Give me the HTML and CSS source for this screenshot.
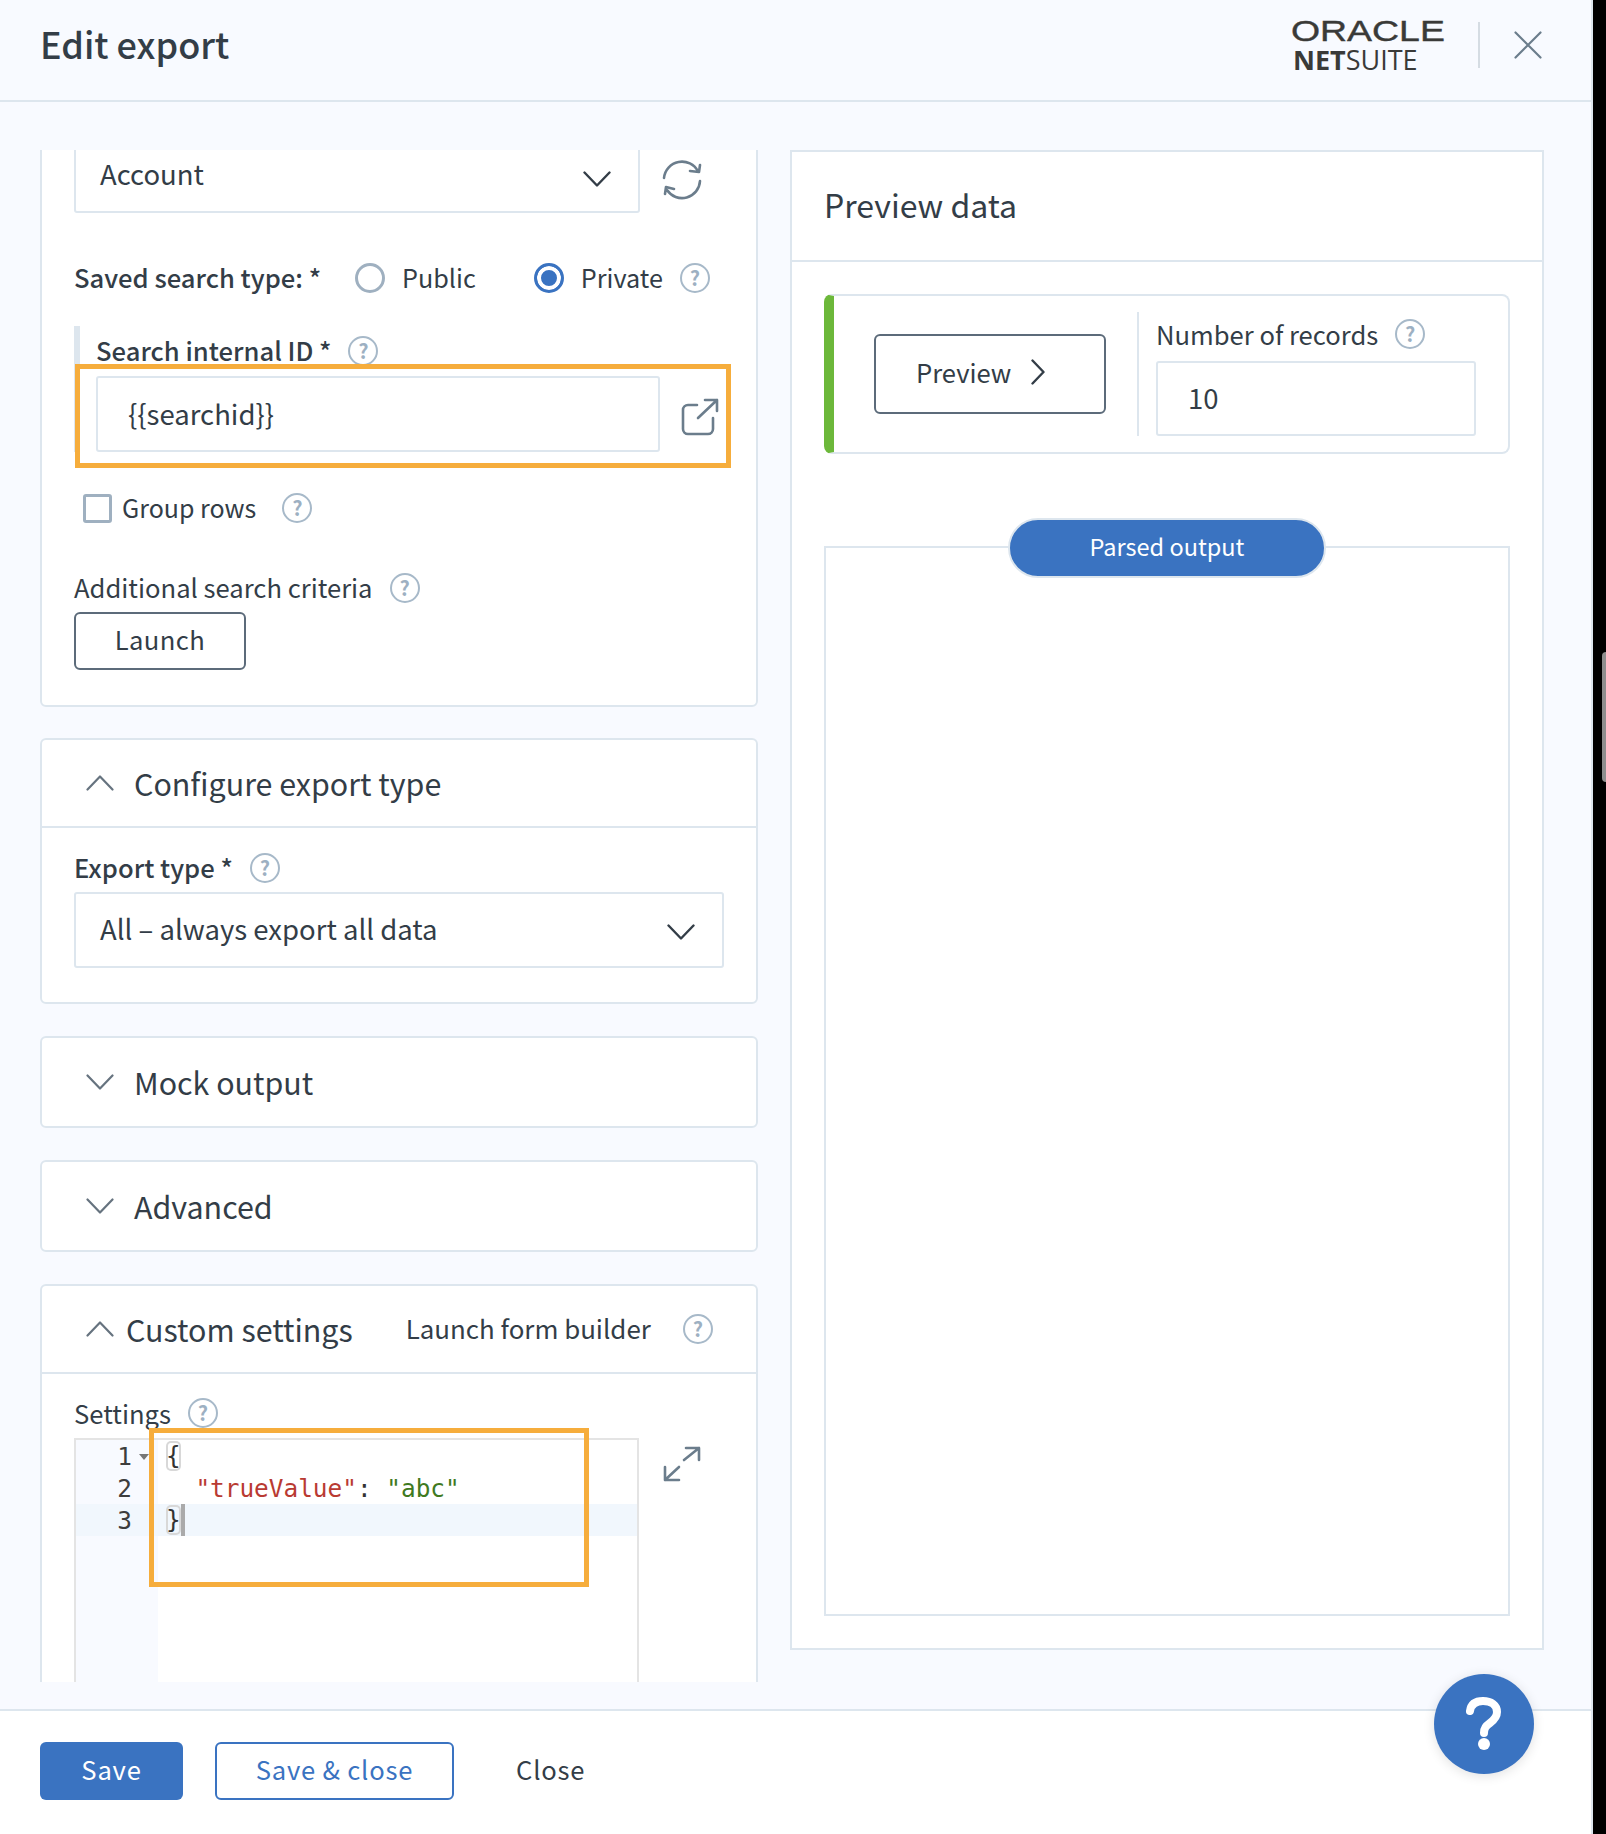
FILE: index.html
```html
<!DOCTYPE html>
<html lang="en">
<head>
<meta charset="utf-8">
<title>Edit export</title>
<link rel="stylesheet" href="styles.css">
</head>
<body>
<svg class="sprite" aria-hidden="true">
  <symbol id="chev-down" viewBox="0 0 28 16"><path d="M1.500 1.500 14 14.500 26.500 1.500"/></symbol>
  <symbol id="chev-up" viewBox="0 0 28 16"><path d="M1.500 14.500 14 1.500 26.500 14.500"/></symbol>
  <symbol id="refresh" viewBox="0 0 40 40"><path d="M2 18A18 18 0 0 1 36 11.500M28 11l9 1 1-7M38 21A18 18 0 0 1 5 30M3 34l1-7 8 2"/></symbol>
  <symbol id="external" viewBox="0 0 40 40"><path d="M17 8H8a5 5 0 0 0-5 5v19a5 5 0 0 0 5 5h20a5 5 0 0 0 5-5V21M18 21 37 3M25 3h12v11"/></symbol>
  <symbol id="expand" viewBox="0 0 40 40"><path d="M22 15 37 3M24 3h13v12M17 22 3 35M3 22v13h14"/></symbol>
</svg>
<div class="window">
  <div class="drawer">
    <header class="topbar">
      <h1 class="topbar-title">Edit export</h1>
      <div class="brand">
        <div class="logo">
          <span class="logo-oracle">ORACLE</span>
          <span class="logo-netsuite"><b>NET</b>SUITE</span>
        </div>
        <span class="brand-sep"></span>
        <svg class="close-icon" viewBox="0 0 28 28"><path d="M1.500 1.500 26.500 26.500M26.500 1.500 1.500 26.500"/></svg>
      </div>
    </header>

    <main class="content">
      <div class="col-left">
        <section class="card card-scrolled">
          <div class="row-with-icon">
            <div class="select select-account"><span>Account</span><svg class="chev"><use href="#chev-down"/></svg></div>
            <svg class="tool-icon"><use href="#refresh"/></svg>
          </div>
          <div class="radio-row">
            <span class="label-strong">Saved search type: *</span>
            <span class="radio radio-public"></span><span class="radio-text">Public</span>
            <span class="radio radio-private"></span><span class="radio-text">Private</span>
            <span class="help">?</span>
          </div>
          <div class="search-block">
            <div class="search-label"><span class="label-strong">Search internal ID *</span><span class="help">?</span></div>
            <div class="row-with-icon">
              <div class="input input-search">{{searchid}}</div>
              <svg class="tool-icon tool-external"><use href="#external"/></svg>
            </div>
          </div>
          <div class="check-row">
            <span class="checkbox"></span><span class="check-text">Group rows</span><span class="help help-wide">?</span>
          </div>
          <div class="criteria-label"><span class="label-text">Additional search criteria</span><span class="help">?</span></div>
          <button class="btn btn-launch">Launch</button>
        </section>

        <section class="card card-export">
          <div class="card-head card-head-open">
            <svg class="chev chev-head"><use href="#chev-up"/></svg>
            <h2 class="card-title">Configure export type</h2>
          </div>
          <div class="card-body">
            <div class="field-label"><span class="label-strong">Export type *</span><span class="help">?</span></div>
            <div class="select select-full"><span>All – always export all data</span><svg class="chev"><use href="#chev-down"/></svg></div>
          </div>
        </section>

        <section class="card card-closed">
          <div class="card-head">
            <svg class="chev chev-head"><use href="#chev-down"/></svg>
            <h2 class="card-title">Mock output</h2>
          </div>
        </section>

        <section class="card card-closed">
          <div class="card-head">
            <svg class="chev chev-head"><use href="#chev-down"/></svg>
            <h2 class="card-title">Advanced</h2>
          </div>
        </section>

        <section class="card">
          <div class="card-head card-head-open">
            <svg class="chev chev-head chev-custom"><use href="#chev-up"/></svg>
            <h2 class="card-title">Custom settings</h2>
            <span class="head-link">Launch form builder</span>
            <span class="help help-end">?</span>
          </div>
          <div class="card-body card-body-settings">
            <div class="settings-label"><span>Settings</span><span class="help">?</span></div>
            <div class="row-with-icon row-editor">
              <div class="editor">
                <div class="editor-gutter">
                  <div class="gutter-line">1<i class="fold"></i></div>
                  <div class="gutter-line">2</div>
                  <div class="gutter-line gutter-active">3</div>
                </div>
                <div class="editor-code">
                  <div class="code-line"><span class="bracket">{</span></div>
                  <div class="code-line">  <span class="tok-key">"trueValue"</span>: <span class="tok-str">"abc"</span></div>
                  <div class="code-line code-active"><span class="bracket">}</span><i class="cursor"></i></div>
                </div>
              </div>
              <svg class="tool-icon tool-expand"><use href="#expand"/></svg>
            </div>
          </div>
        </section>
      </div>

      <section class="card preview-card">
        <h2 class="preview-title">Preview data</h2>
        <div class="preview-body">
          <div class="preview-bar">
            <button class="btn btn-preview">Preview<svg class="chev-right" viewBox="0 0 14 26"><path d="M1.500 1.500 12.500 13 1.500 24.500"/></svg></button>
            <span class="bar-sep"></span>
            <div class="records">
              <div class="records-label"><span>Number of records</span><span class="help">?</span></div>
              <div class="input input-records">10</div>
            </div>
          </div>
          <div class="output-panel">
            <span class="pill">Parsed output</span>
          </div>
        </div>
      </section>
    </main>

    <footer class="footer">
      <button class="btn btn-primary">Save</button>
      <button class="btn btn-outline">Save &amp; close</button>
      <button class="btn btn-text">Close</button>
    </footer>

    <div class="note note-search"></div>
    <div class="note note-settings"></div>
    <div class="help-bubble"><svg viewBox="0 0 36 54"><path class="q" d="M4 14C5 7 10 4 17 4c8 0 14 4 14 11 0 5-3 8-7 11-4 3-6 5-6 10"/><circle class="q-dot" cx="18" cy="47" r="6"/></svg></div>
  </div>
  <div class="page-scroll"><span class="page-thumb"></span></div>
</div>
</body>
</html>
```

FILE: styles.css
```css
* { box-sizing: border-box; }
html, body { margin: 0; padding: 0; }
body {
  width: 1606px;
  height: 1834px;
  overflow: hidden;
  background: #000;
  color: #333d47;
  font-family: "Noto Sans CJK SC", "Noto Sans", sans-serif;
  font-size: 25.6px;
  line-height: 36px;
}
.sprite { width: 0; height: 0; position: absolute; }
.window { display: flex; height: 1834px; }
.drawer {
  position: relative;
  width: 1593px;
  height: 1834px;
  display: flex;
  flex-direction: column;
  background: #f8faff;
  border-right: 2px solid #dde6ee;
}
.page-scroll { flex: 1; padding: 652px 0 0 9px; }
.page-thumb { display: block; width: 4px; height: 130px; background: #8e8e8e; border-radius: 4px 0 0 4px; }

/* top bar */
.topbar {
  flex: none;
  height: 102px;
  padding: 0 49px 0 40px;
  display: flex;
  align-items: center;
  justify-content: space-between;
  border-bottom: 2px solid #dde6ee;
}
.topbar-title { margin: -14px 0 0; font-size: 36px; line-height: 44px; font-weight: 500; }
.brand { display: flex; align-items: center; margin-top: -10px; }
.logo { width: 152px; display: flex; flex-direction: column; color: #3a3a38; }
.logo-oracle {
  font-family: "Liberation Sans", sans-serif;
  font-size: 29px;
  line-height: 28px;
  display: block;
  transform: scaleX(1.29);
  transform-origin: left center;
  height: 28px;
  -webkit-text-stroke: 0.4px #3a3a38;
}
.logo-netsuite {
  font-family: "Open Sans", sans-serif;
  font-size: 27px;
  line-height: 28px;
  margin: 1px 0 0 2px;
  white-space: nowrap;
}
.logo-netsuite b { font-weight: 700; }
.brand-sep { width: 2px; height: 46px; background: #d5dce3; margin: 0 34px 0 35px; }
.close-icon { width: 28px; height: 28px; fill: none; stroke: #6b7d8c; stroke-width: 2.2; stroke-linecap: round; }

/* layout */
.content {
  flex: 1;
  min-height: 0;
  display: flex;
  gap: 32px;
  align-items: flex-start;
  padding: 48px 47px 27px 40px;
}
.col-left { width: 718px; height: 100%; overflow: hidden; flex: none; }
.card { background: #fff; border: 2px solid #dde6ee; border-radius: 6px; margin-bottom: 31px; }
.card-export { margin-bottom: 32px; }
.card-closed { margin-bottom: 32px; }
.card-scrolled { margin-top: -50px; padding: 36px 32px 35px; }

.row-with-icon { display: flex; align-items: flex-start; }
.tool-icon { width: 40px; height: 40px; fill: none; stroke: #6b7d8c; stroke-width: 2.6; stroke-linecap: round; stroke-linejoin: round; margin-left: 22px; flex: none; margin-top: 22px; }
.tool-external { margin-left: 20px; margin-top: 21px; }

.select, .input {
  border: 2px solid #dde6ee;
  border-radius: 3px;
  background: #fff;
  display: flex;
  align-items: center;
  font-size: 27.5px;
  padding-bottom: 4px;
}
.select { justify-content: space-between; padding-left: 24px; padding-right: 27px; height: 76px; }
.select-account { width: 566px; height: 75px; padding-bottom: 6px; }
.select-full { width: 650px; }
.chev { width: 28px; height: 16px; fill: none; stroke: #333d47; stroke-width: 2.4; stroke-linecap: round; stroke-linejoin: round; flex: none; }
.select .chev { margin-top: 8px; }
.select-account .chev { margin-top: 12px; }

.label-strong { font-weight: 500; white-space: nowrap; margin-bottom: 2px; }
.label-text { margin-bottom: 2px; }
.radio-row { display: flex; align-items: center; height: 40px; margin-top: 45px; white-space: nowrap; }
.radio { width: 30px; height: 30px; border-radius: 50%; border: 3px solid #9fb0c0; background: #fff; flex: none; }
.radio-public { margin-left: 34px; }
.radio-private { margin-left: 58px; border-color: #3a73c1; box-shadow: inset 0 0 0 4px #fff; background: #3a73c1; }
.radio-text { margin: 0 0 2px 17px; font-size: 25.2px; }

.help {
  display: inline-flex;
  align-items: center;
  justify-content: center;
  width: 30px;
  height: 30px;
  border-radius: 50%;
  border: 2px solid #a7b9c9;
  color: #9db0c2;
  font-size: 20px;
  line-height: 1;
  font-weight: 700;
  background: #fff;
  margin-left: 17px;
  flex: none;
}

.search-block { margin-top: 28px; border-left: 6px solid #dde6ee; padding-left: 16px; }
.search-label { height: 50px; display: flex; align-items: center; }
.input-search { width: 564px; height: 76px; padding-left: 30px; padding-bottom: 2px; }

.check-row { display: flex; align-items: center; height: 40px; margin-top: 36px; padding-left: 9px; }
.checkbox { width: 29px; height: 29px; border: 3px solid #9fb0c0; border-radius: 3px; margin-right: 10px; flex: none; }
.check-text { font-size: 25px; margin-bottom: 2px; }
.help-wide { margin-left: 26px; }

.criteria-label { display: flex; align-items: center; height: 49px; margin-top: 35px; }

.btn { font: inherit; color: inherit; background: #fff; cursor: pointer; padding: 0 0 4px; margin: 0; border-radius: 6px; }
.btn-launch { display: block; width: 172px; height: 58px; border: 2px solid #5c6b7a; letter-spacing: 0.4px; }

.card-head { display: flex; align-items: center; height: 88px; padding-left: 44px; white-space: nowrap; }
.card-head-open { border-bottom: 2px solid #dde6ee; }
.chev-head { stroke: #66737f; stroke-width: 2.2; margin-right: 20px; }
.chev-custom { margin-right: 12px; }
.card-title { margin: 0; font-size: 30.4px; line-height: 40px; font-weight: 400; }
.head-link { margin-left: 53px; margin-bottom: 2px; font-size: 25.9px; }
.help-end { margin-left: 32px; margin-bottom: 1px; }
.card-body { padding: 18px 32px 34px; }
.field-label { display: flex; align-items: center; height: 46px; padding-bottom: 3px; }

.card-body-settings { padding: 18px 32px 0; }
.settings-label { display: flex; align-items: center; height: 45px; margin-top: -2px; margin-bottom: 3px; }
.row-editor { height: 420px; }
.tool-expand { margin-top: 7px; margin-left: 23px; }
.editor {
  width: 565px;
  height: 420px;
  border: 2px solid #e4e4e4;
  border-bottom: 0;
  display: flex;
  font-family: "DejaVu Sans Mono", monospace;
  font-size: 24.4px;
  line-height: 32px;
  flex: none;
}
.editor-gutter { width: 82px; background: #f8faff; flex: none; color: #3d3d3d; }
.gutter-line { height: 32px; padding: 1px 26px 0 0; text-align: right; position: relative; }
.gutter-active { background: #f1f7fd; }
.fold { position: absolute; right: 9px; top: 14px; border: 5px solid transparent; border-top: 6px solid #777; border-bottom: 0; }
.editor-code { flex: 1; }
.code-line { height: 32px; padding: 1px 0 0 8px; color: #333; white-space: pre; }
.code-active { background: #f1f7fd; }
.tok-key { color: #b93a32; }
.tok-str { color: #3f7a1f; }
.bracket { box-shadow: inset 0 0 0 2px #d8d8d8; border-radius: 5px; display: inline-block; height: 30px; vertical-align: top; line-height: 30px; }
.cursor { display: inline-block; width: 4px; height: 32px; margin-top: -1px; background: #aaa; vertical-align: top; }

/* right */
.preview-card { width: 754px; border-radius: 0; margin: 0; flex: none; }
.preview-title { margin: 0; height: 110px; border-bottom: 2px solid #dde6ee; padding: 0 0 4px 32px; display: flex; align-items: center; font-size: 32px; line-height: 40px; font-weight: 400; }
.preview-body { padding: 32px; }
.preview-bar {
  height: 160px;
  border: 2px solid #dde6ee;
  border-left: 10px solid #6cb83a;
  border-radius: 8px;
  display: flex;
  align-items: center;
  padding-left: 40px;
}
.btn-preview { width: 232px; height: 80px; border: 2px solid #5c6b7a; display: flex; align-items: center; padding-left: 40px; }
.chev-right { width: 14px; height: 26px; margin-left: 20px; fill: none; stroke: #333d47; stroke-width: 2.4; stroke-linecap: round; stroke-linejoin: round; }
.bar-sep { width: 2px; height: 124px; background: #dde6ee; margin: 0 17px 0 31px; }
.records { display: flex; flex-direction: column; margin-top: -2px; }
.records-label { display: flex; align-items: center; height: 50px; padding-bottom: 4px; }
.input-records { width: 320px; height: 75px; padding-left: 30px; padding-bottom: 2px; }
.output-panel { margin-top: 92px; height: 1070px; border: 2px solid #dde6ee; display: flex; justify-content: center; align-items: flex-start; }
.pill {
  width: 318px;
  height: 60px;
  margin-top: -30px;
  padding-bottom: 4px;
  background: #3a73c1;
  border: 2px solid #dde6ee;
  border-radius: 30px;
  color: #fff;
  font-size: 23.5px;
  display: flex;
  align-items: center;
  justify-content: center;
}

/* footer */
.footer {
  flex: none;
  height: 125px;
  background: #fff;
  border-top: 2px solid #dde6ee;
  padding: 31px 0 0 40px;
  display: flex;
  align-items: flex-start;
}
.btn-primary, .btn-outline, .btn-text { height: 58px; letter-spacing: 0.8px; }
.btn-primary { width: 143px; background: #3a73c1; border: 0; color: #fff; }
.btn-outline { width: 239px; margin-left: 32px; border: 2px solid #3a73c1; color: #3a73c1; }
.btn-text { border: 0; margin-left: 62px; }

/* overlays */
.note { position: absolute; border: 5px solid #f6ad3c; }
.note-search { left: 75px; top: 364px; width: 656px; height: 104px; }
.note-settings { left: 149px; top: 1428px; width: 440px; height: 159px; }
.help-bubble {
  position: absolute;
  left: 1434px;
  top: 1674px;
  width: 100px;
  height: 100px;
  border-radius: 50%;
  background: #3a73c1;
  box-shadow: 0 2px 12px rgba(0, 0, 0, .12);
  display: flex;
  align-items: center;
  justify-content: center;
}
.help-bubble svg { width: 36px; height: 54px; }
.q { fill: none; stroke: #fff; stroke-width: 8; stroke-linecap: round; }
.q-dot { fill: #fff; }
```
